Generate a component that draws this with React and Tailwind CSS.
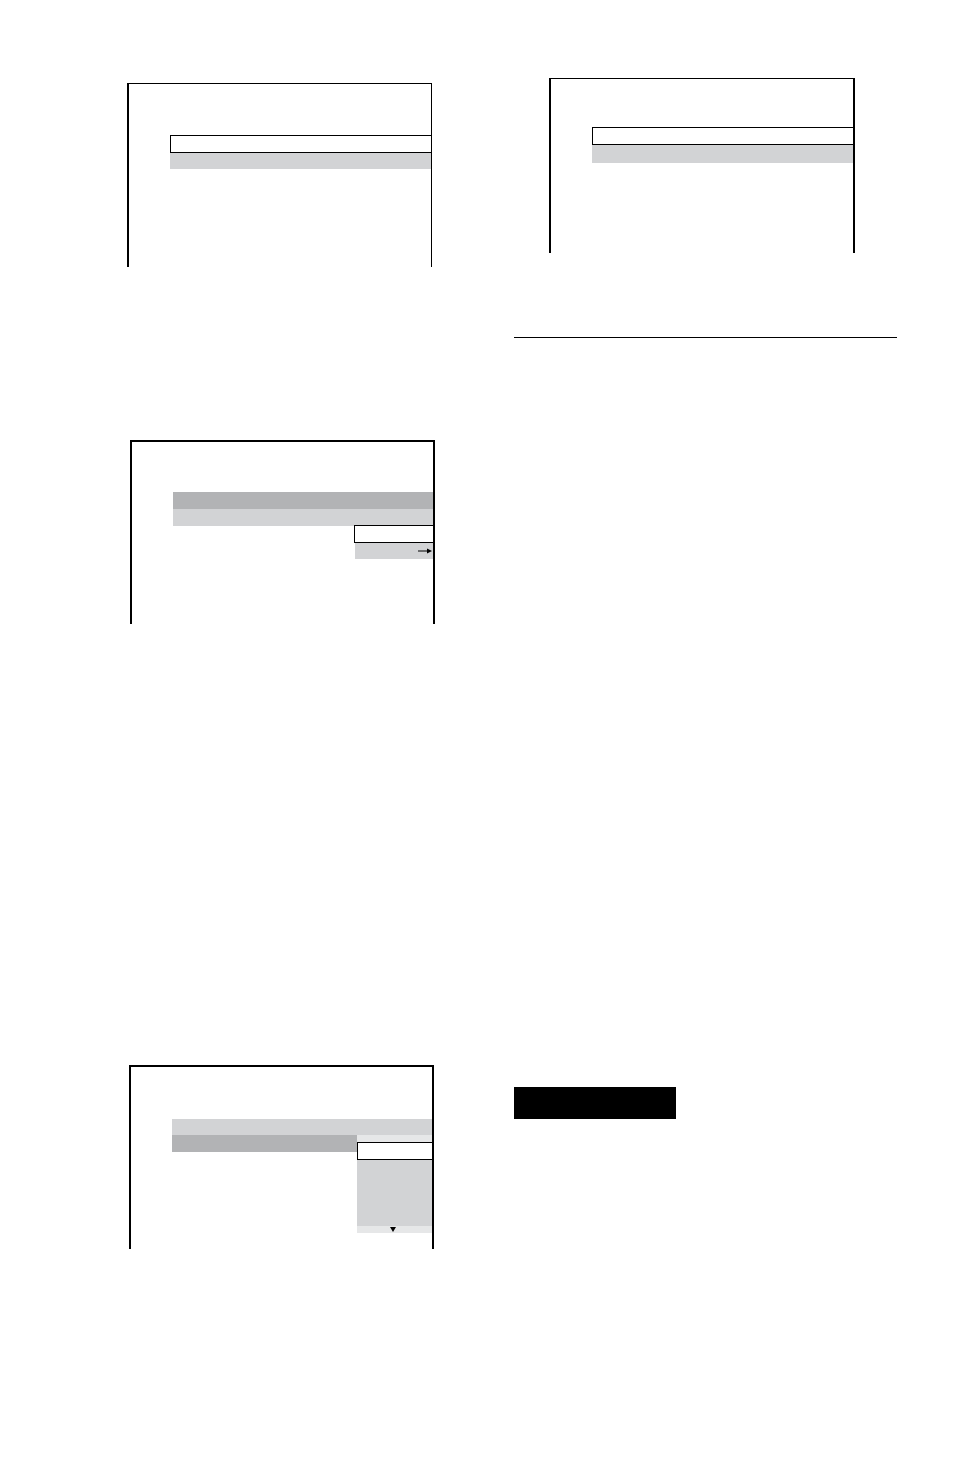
export default function App() {
  return (
    <div className="w-[954px] h-[1482px] bg-white flex">
      {/* left column */}
      <div className="w-[514px] shrink-0 pt-[83px]">
        {/* screen 1 */}
        <div className="ml-[127px] w-[305px] h-[184px] border-l-2 border-t border-r border-black pt-[51px] pl-[41px]">
          <div className="h-[18px] border border-r-0 border-black bg-white" />
          <div className="h-[16px] bg-[#d2d3d5]" />
        </div>

        {/* screen 2 */}
        <div className="mt-[173px] ml-[130px] w-[305px] h-[184px] border-l-2 border-t-2 border-r-2 border-black pt-[50px] pl-[41px]">
          <div className="h-[17px] bg-[#b2b3b5]" />
          <div className="h-[17px] bg-[#d2d3d5]" />
          <div className="ml-auto -mt-px w-[79px] h-[18px] border border-r-0 border-black bg-white" />
          <div className="ml-auto w-[78px] h-[16px] bg-[#d2d3d5] flex items-center justify-end pr-[1px]">
            <svg width="14" height="6" viewBox="0 0 14 6">
              <line x1="0" y1="3" x2="10" y2="3" stroke="#000" strokeWidth="1" />
              <polygon points="9,0.5 14,3 9,5.5" fill="#000" />
            </svg>
          </div>
        </div>

        {/* screen 3 */}
        <div className="mt-[441px] ml-[129px] w-[305px] h-[184px] border-l-2 border-t-2 border-r-2 border-black pt-[52px] pl-[41px]">
          <div className="h-[16px] bg-[#d2d3d5]" />
          <div className="flex">
            <div className="flex-1 h-[17px] bg-[#b2b3b5]" />
            <div className="w-[75px] flex flex-col">
              <div className="h-[7px] bg-[#e6e7e8]" />
              <div className="h-[18px] border border-r-0 border-black bg-white" />
              <div className="h-[66px] bg-[#d2d3d5]" />
              <div className="h-[7px] bg-[#e6e7e8] flex items-center justify-center pr-[3px]">
                <svg width="6" height="5" viewBox="0 0 6 5">
                  <polygon points="0,0 6,0 3,5" fill="#000" />
                </svg>
              </div>
            </div>
          </div>
        </div>
      </div>

      {/* right column */}
      <div className="flex-1 pt-[78px]">
        <div className="ml-[35px] w-[306px] h-[175px] border-l-2 border-t-[1.5px] border-r-2 border-black pt-[48px] pl-[41px]">
          <div className="h-[18px] border border-r-0 border-black bg-white" />
          <div className="h-[18px] bg-[#d2d3d5]" />
        </div>
        <div className="mt-[84px] w-[383px] border-t-[1.5px] border-black" />
        <div className="mt-[749px] w-[162px] h-[32px] bg-black" />
      </div>
    </div>
  );
}
